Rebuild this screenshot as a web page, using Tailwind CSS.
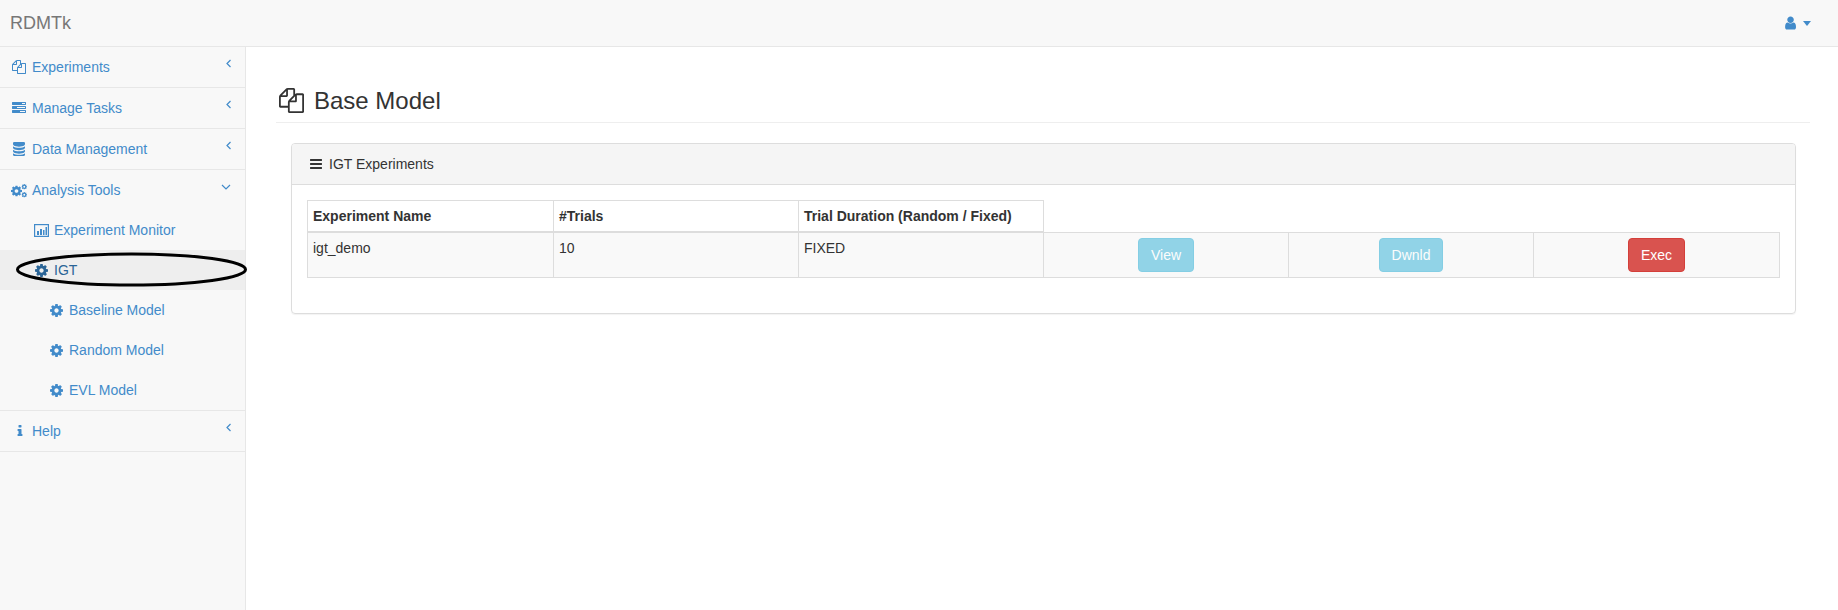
<!DOCTYPE html>
<html lang="en">
<head>
    <meta charset="UTF-8">
    <title>RDMTk</title>
    <script src="https://cdn.jsdelivr.net/npm/@tailwindcss/browser@4"></script>
</head>
<body class="h-[610px] overflow-hidden bg-white text-[14px] leading-[20px] text-[#333] font-['Liberation_Sans',Arial,sans-serif]">

    <!-- shared icons -->
    <svg class="hidden">
        <symbol id="i-cog" viewBox="0 0 1536 1536"><path fill="currentColor" d="M1024 768q0-106-75-181t-181-75-181 75-75 181 75 181 181 75 181-75 75-181zm512-109v222q0 12-8 23t-20 13l-185 28q-19 54-39 91 35 50 107 138 10 12 10 25t-9 23q-27 37-99 108t-94 71q-12 0-26-9l-138-108q-44 23-91 38-16 136-29 186-7 28-36 28h-222q-14 0-24.5-8.5t-11.5-21.5l-28-184q-49-16-90-37l-141 107q-10 9-25 9-14 0-25-11-126-114-165-168-7-10-7-23 0-12 8-23 15-21 51-66.5t54-70.5q-27-50-41-99l-183-27q-13-2-21-12.5t-8-23.5v-222q0-12 8-23t19-13l186-28q14-46 39-92-40-57-107-138-10-12-10-24 0-10 9-23 26-36 98.5-107.5t94.5-71.5q13 0 26 10l138 107q44-23 91-38 16-136 29-186 7-28 36-28h222q14 0 24.5 8.5t11.5 21.5l28 184q49 16 90 37l142-107q9-9 24-9 13 0 25 10 129 119 165 170 7 8 7 22 0 12-8 23-15 21-51 66.5t-54 70.5q26 50 41 98l183 28q13 2 21 12.5t8 23.5z"/></symbol>
        <symbol id="i-files" viewBox="0 0 1792 1792"><path fill="currentColor" d="M1696 384q40 0 68 28t28 68v1216q0 40-28 68t-68 28h-960q-40 0-68-28t-28-68v-288h-544q-40 0-68-28t-28-68v-672q0-40 20-88t48-76l408-408q28-28 76-48t88-20h416q40 0 68 28t28 68v328q68-40 128-40h416zm-544 213l-299 299h299v-299zm-640-384l-299 299h299v-299zm196 647l316-316v-416h-384v416q0 40-28 68t-68 28h-416v640h512v-256q0-40 20-88t48-76zm956 804v-1152h-384v416q0 40-28 68t-68 28h-416v640h896z"/></symbol>
        <symbol id="i-left" viewBox="0 0 8 12"><path d="M5.500 2 2 5.500 5.500 9" fill="none" stroke="currentColor" stroke-width="1.200"/></symbol>
    </svg>

    <!-- Navbar -->
    <header class="flex h-[47px] items-center justify-between border-b border-[#e7e7e7] bg-[#f8f8f8] pl-[10px] pr-[27px]">
        <a class="text-[18px] text-[#777]">RDMTk</a>
        <div class="flex items-center gap-[7px] text-[#428bca]">
            <svg class="h-[14px] w-[12px]" viewBox="128 128 1408 1536"><path fill="currentColor" d="M1536 1399q0 109-62.500 187t-150.500 78h-854q-88 0-150.500-78t-62.500-187q0-85 8.500-160.500t31.500-152 58.500-131 94-89 134.500-34.500q131 128 313 128t313-128q76 0 134.500 34.500t94 89 58.500 131 31.500 152 8.500 160.500zm-256-887q0 159-112.500 271.500t-271.500 112.500-271.500-112.500-112.500-271.500 112.500-271.500 271.500-112.500 271.500 112.500 112.500 271.500z"/></svg>
            <span class="h-0 w-0 border-x-[4.500px] border-t-[5px] border-x-transparent border-t-[#428bca]"></span>
        </div>
    </header>

    <div class="flex h-[563px]">
        <!-- Sidebar -->
        <nav class="w-[246px] shrink-0 border-r border-[#e7e7e7] bg-[#f8f8f8] text-[#428bca]">
            <a class="flex h-[41px] items-center border-b border-[#e7e7e7] pl-[12px] pr-[12px]">
                <svg class="h-[14px] w-[14px]"><use href="#i-files"/></svg>
                <span class="ml-[6px] flex-1">Experiments</span>
                <svg class="mb-[7px] h-[12px] w-[8px]"><use href="#i-left"/></svg>
            </a>
            <a class="flex h-[41px] items-center border-b border-[#e7e7e7] pl-[12px] pr-[12px]">
                <svg class="h-[14px] w-[14px]" viewBox="0 0 1792 1792"><path fill="currentColor" d="M1024 1408h640v-128h-640v128zm-384-512h1024v-128h-1024v128zm640-512h384v-128h-384v128zm512 832v256q0 26-19 45t-45 19h-1664q-26 0-45-19t-19-45v-256q0-26 19-45t45-19h1664q26 0 45 19t19 45zm0-512v256q0 26-19 45t-45 19h-1664q-26 0-45-19t-19-45v-256q0-26 19-45t45-19h1664q26 0 45 19t19 45zm0-512v256q0 26-19 45t-45 19h-1664q-26 0-45-19t-19-45v-256q0-26 19-45t45-19h1664q26 0 45 19t19 45z"/></svg>
                <span class="ml-[6px] flex-1">Manage Tasks</span>
                <svg class="mb-[7px] h-[12px] w-[8px]"><use href="#i-left"/></svg>
            </a>
            <a class="flex h-[41px] items-center border-b border-[#e7e7e7] pl-[13px] pr-[12px]">
                <svg class="h-[14px] w-[12px]" viewBox="128 128 1536 1536" preserveAspectRatio="none"><path fill="currentColor" d="M896 768q237 0 443-43t325-127v170q0 69-103 128t-280 93.500-385 34.500-385-34.500-280-93.500-103-128v-170q119 84 325 127t443 43zm0 768q237 0 443-43t325-127v170q0 69-103 128t-280 93.500-385 34.500-385-34.500-280-93.500-103-128v-170q119 84 325 127t443 43zm0-384q237 0 443-43t325-127v170q0 69-103 128t-280 93.500-385 34.500-385-34.500-280-93.500-103-128v-170q119 84 325 127t443 43zm0-1152q208 0 385 34.500t280 93.500 103 128v128q0 69-103 128t-280 93.500-385 34.500-385-34.500-280-93.500-103-128v-128q0-69 103-128t280-93.500 385-34.500z"/></svg>
                <span class="ml-[7px] flex-1">Data Management</span>
                <svg class="mb-[7px] h-[12px] w-[8px]"><use href="#i-left"/></svg>
            </a>

            <!-- Analysis Tools, opened -->
            <div class="border-b border-[#e7e7e7]">
                <a class="flex h-[40px] items-center pl-[11px] pr-[13px]">
                    <svg class="h-[15px] w-[16px]" viewBox="0 0 16 15">
                        <use href="#i-cog" x="0" y="2.500" width="11" height="11"/>
                        <use href="#i-cog" x="10.500" y="1" width="5.500" height="5.500"/>
                        <use href="#i-cog" x="10.500" y="9" width="5.500" height="5.500"/>
                    </svg>
                    <span class="ml-[5px] flex-1">Analysis Tools</span>
                    <svg class="mb-[7px] h-[8px] w-[12px]" viewBox="0 0 12 8"><path d="M2 2 6 6 10 2" fill="none" stroke="currentColor" stroke-width="1.200"/></svg>
                </a>
                <a class="flex h-[40px] items-center pl-[34px]">
                    <svg class="h-[13px] w-[15px]" viewBox="0 0 15 13">
                        <rect x=".6" y=".6" width="13.800" height="11.800" fill="none" stroke="currentColor" stroke-width="1.200"/>
                        <path fill="currentColor" d="M3 7h2v4H3zM6 5h2v6H6zM9 6h1.500v5H9zM11.500 3H13v8h-1.500z"/>
                    </svg>
                    <span class="ml-[5px]">Experiment Monitor</span>
                </a>
                <a class="flex h-[40px] items-center bg-[#eee] pl-[35px] text-[#2a6496]">
                    <svg class="h-[13px] w-[13px]"><use href="#i-cog"/></svg>
                    <span class="ml-[6px]">IGT</span>
                </a>
                <a class="flex h-[40px] items-center pl-[50px]">
                    <svg class="h-[13px] w-[13px]"><use href="#i-cog"/></svg>
                    <span class="ml-[6px]">Baseline Model</span>
                </a>
                <a class="flex h-[40px] items-center pl-[50px]">
                    <svg class="h-[13px] w-[13px]"><use href="#i-cog"/></svg>
                    <span class="ml-[6px]">Random Model</span>
                </a>
                <a class="flex h-[40px] items-center pl-[50px]">
                    <svg class="h-[13px] w-[13px]"><use href="#i-cog"/></svg>
                    <span class="ml-[6px]">EVL Model</span>
                </a>
            </div>

            <a class="flex h-[41px] items-center border-b border-[#e7e7e7] pl-[13px] pr-[12px]">
                <svg class="h-[14px] w-[14px]" viewBox="0 0 1792 1792"><path fill="currentColor" d="M1216 1344v128q0 26-19 45t-45 19h-512q-26 0-45-19t-19-45v-128q0-26 19-45t45-19h64v-384h-64q-26 0-45-19t-19-45v-128q0-26 19-45t45-19h384q26 0 45 19t19 45v576h64q26 0 45 19t19 45zm-128-1152v192q0 26-19 45t-45 19h-256q-26 0-45-19t-19-45v-192q0-26 19-45t45-19h256q26 0 45 19t19 45z"/></svg>
                <span class="ml-[5px] flex-1">Help</span>
                <svg class="mb-[7px] h-[12px] w-[8px]"><use href="#i-left"/></svg>
            </a>
        </nav>

        <!-- Main -->
        <main class="flex-1 pl-[30px] pr-[29px]">
            <h1 class="mt-[38px] flex h-[38px] items-center border-b border-[#eee] pb-[6px] pl-[3px] text-[24px] leading-[26px]">
                <svg class="h-[25px] w-[25px]"><use href="#i-files"/></svg>
                <span class="ml-[10px]">Base Model</span>
            </h1>

            <!-- Panel -->
            <section class="ml-[15px] mr-[14px] mt-[20px] h-[171px] rounded-[4px] border border-[#ddd] shadow-[0_1px_1px_rgba(0,0,0,0.05)]">
                <div class="flex h-[41px] items-center rounded-t-[3px] border-b border-[#ddd] bg-[#f5f5f5] pl-[17px]">
                    <svg class="h-[14px] w-[14px]" viewBox="0 0 1792 1792"><path fill="currentColor" d="M1664 1344v128q0 26-19 45t-45 19h-1408q-26 0-45-19t-19-45v-128q0-26 19-45t45-19h1408q26 0 45 19t19 45zm0-512v128q0 26-19 45t-45 19h-1408q-26 0-45-19t-19-45v-128q0-26 19-45t45-19h1408q26 0 45 19t19 45zm0-512v128q0 26-19 45t-45 19h-1408q-26 0-45-19t-19-45v-128q0-26 19-45t45-19h1408q26 0 45 19t19 45z"/></svg>
                    <span class="ml-[6px]">IGT Experiments</span>
                </div>
                <div class="px-[15px] pt-[15px]">
                    <table class="w-[1473px] table-fixed border-collapse">
                        <colgroup>
                            <col class="w-[246px]">
                            <col class="w-[245px]">
                            <col class="w-[245px]">
                            <col class="w-[245px]">
                            <col class="w-[245px]">
                            <col class="w-[246px]">
                        </colgroup>
                        <thead>
                            <tr>
                                <th class="border border-b-2 border-[#ddd] px-[5px] py-[5px] text-left font-bold">Experiment Name</th>
                                <th class="border border-b-2 border-[#ddd] px-[5px] py-[5px] text-left font-bold">#Trials</th>
                                <th class="border border-b-2 border-[#ddd] px-[5px] py-[5px] text-left font-bold">Trial Duration (Random / Fixed)</th>
                                <th></th>
                                <th></th>
                                <th></th>
                            </tr>
                        </thead>
                        <tbody>
                            <tr class="bg-[#f9f9f9] align-top">
                                <td class="border border-[#ddd] p-[5px]">igt_demo</td>
                                <td class="border border-[#ddd] p-[5px]">10</td>
                                <td class="border border-[#ddd] p-[5px]">FIXED</td>
                                <td class="border border-[#ddd] p-[5px] text-center">
                                    <button class="h-[34px] rounded-[4px] border border-[#46b8da] bg-[#5bc0de] px-[12px] text-white opacity-65">View</button>
                                </td>
                                <td class="border border-[#ddd] p-[5px] text-center">
                                    <button class="h-[34px] rounded-[4px] border border-[#46b8da] bg-[#5bc0de] px-[12px] text-white opacity-65">Dwnld</button>
                                </td>
                                <td class="border border-[#ddd] p-[5px] text-center">
                                    <button class="h-[34px] rounded-[4px] border border-[#d43f3a] bg-[#d9534f] px-[12px] text-white">Exec</button>
                                </td>
                            </tr>
                        </tbody>
                    </table>
                </div>
            </section>
        </main>
    </div>

    <!-- hand-drawn ellipse annotation over the IGT item -->
    <svg class="pointer-events-none absolute left-[14px] top-[250px] h-[40px] w-[236px]" viewBox="0 0 236 40">
        <ellipse cx="117.500" cy="19.500" rx="114" ry="15.500" fill="none" stroke="#000" stroke-width="3"/>
    </svg>
</body>
</html>
